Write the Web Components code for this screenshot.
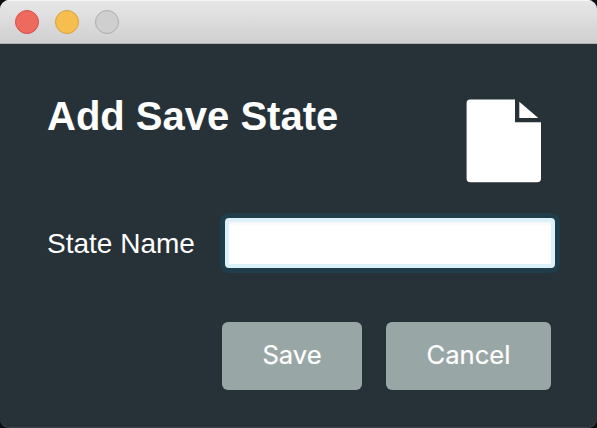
<!DOCTYPE html>
<html lang="en">
<head>
<meta charset="utf-8">
<title>Add Save State</title>
<style>html,body{margin:0;background:#0d1013}</style>
</head>
<body>
<app-window>
  <dialog-heading slot="heading">Add Save State</dialog-heading>
  <file-icon slot="icon"></file-icon>
  <name-field slot="field">State Name</name-field>
  <push-button slot="actions" style="--w:140px">Save</push-button>
  <push-button slot="actions" style="--w:165px">Cancel</push-button>
</app-window>
<script>
const define = (name, html) => customElements.define(name, class extends HTMLElement {
  constructor() {
    super();
    this.attachShadow({ mode: 'open' }).innerHTML = html;
  }
});

define('title-bar', `<style>
:host{display:flex;box-sizing:border-box;height:44px;padding:10px 15px;gap:16px;background:linear-gradient(#e7e7e7,#d0d0d0);border-bottom:1px solid #b0b0b0;box-shadow:inset 0 1px #f5f5f5}
i{box-sizing:border-box;width:24px;height:24px;border-radius:50%;border:1px solid}
.close{background:#ee6a5f;border-color:#d6504a}
.min{background:#f6be4f;border-color:#d9a03b}
.zoom{background:#cfcfcf;border-color:#adadad}
</style><i class="close"></i><i class="min"></i><i class="zoom"></i>`);

define('dialog-heading', `<style>
:host{display:block;font:bold 40px/44px "Liberation Sans",Arial,sans-serif;color:#fff;white-space:nowrap}
</style><slot></slot>`);

define('file-icon', `<style>
:host{display:block;width:76px;height:84px}
svg{display:block}
</style><svg width="76" height="84" viewBox="0 0 76 84" fill="#fff">
<path d="M4 .5H49V23.3H75V79.5Q75 83.3 71.2 83.3H4.3Q.6 83.3 .6 79.5V4Q.6 .5 4 .5Z"/>
<path d="M53.3 2.8L72.3 19H53.3Z"/></svg>`);

define('name-field', `<style>
:host{display:flex;align-items:center;color:#fff;font:28px/32px "Liberation Sans",Arial,sans-serif}
label{width:178px;padding-top:2px;white-space:nowrap}
input{box-sizing:border-box;width:330px;height:50px;margin:0;padding:0 8px;border:4px solid #dcf1f9;border-radius:4px;background:linear-gradient(#f6f6f6,#fff 4px);outline:none;box-shadow:0 0 0 5px #203d4b;font:inherit}
</style><label for="name"><slot></slot></label><input id="name" type="text">`);

define('push-button', `<style>
:host{display:block}
button{display:block;width:var(--w);height:68px;margin:0;padding:0 0 2px;border:0;border-radius:6px;background:#99a6a6;color:#fff;font:25.6px/66px Inter,sans-serif;-webkit-text-stroke:.2px #fff}
</style><button type="button"><slot></slot></button>`);

define('app-window', `<style>
:host{display:block;box-sizing:border-box;width:597px;height:428px;border-radius:9px;background:#273238;overflow:hidden;box-shadow:inset 0 -1px #3a434a}
main{padding:50px 0 0 47px}
header{display:flex;justify-content:space-between;width:495px;height:124px}
.icon{padding-top:5px}
footer{display:flex;gap:24px;padding:54px 0 0 175px}
</style><title-bar></title-bar><main>
<header><slot name="heading"></slot><div class="icon"><slot name="icon"></slot></div></header>
<slot name="field"></slot>
<footer><slot name="actions"></slot></footer></main>`);
</script>
</body>
</html>
